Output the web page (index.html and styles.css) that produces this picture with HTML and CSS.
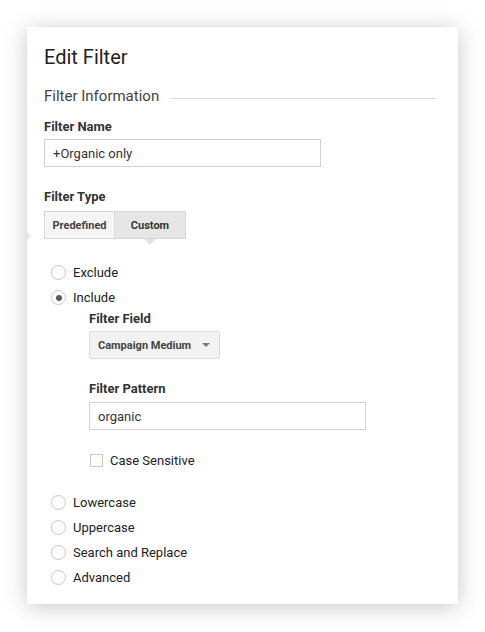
FILE: index.html
```html
<!DOCTYPE html>
<html>
<head>
<meta charset="utf-8">
<link rel="stylesheet" href="styles.css">
</head>
<body>
<div class="card">
  <span class="edge-tick"></span>
  <h1 class="title">Edit Filter</h1>
  <div class="section-head">
    <span class="section-title">Filter Information</span>
    <span class="section-rule"></span>
  </div>
  <div class="label label-name">Filter Name</div>
  <div class="input input-name">+Organic only</div>
  <div class="label label-type">Filter Type</div>
  <div class="btn-group">
    <div class="seg">Predefined</div>
    <div class="seg seg-active">Custom</div>
  </div>
  <div class="radios radios-top">
    <div class="radio-row"><span class="radio"></span><span class="radio-text">Exclude</span></div>
    <div class="radio-row"><span class="radio radio-on"></span><span class="radio-text">Include</span></div>
  </div>
  <div class="nested">
    <div class="label label-field">Filter Field</div>
    <div class="select"><span class="select-text">Campaign Medium</span><span class="caret"></span></div>
    <div class="label label-pattern">Filter Pattern</div>
    <div class="input input-pattern">organic</div>
    <div class="check-row"><span class="checkbox"></span><span class="check-text">Case Sensitive</span></div>
  </div>
  <div class="radios radios-bottom">
    <div class="radio-row"><span class="radio"></span><span class="radio-text">Lowercase</span></div>
    <div class="radio-row"><span class="radio"></span><span class="radio-text">Uppercase</span></div>
    <div class="radio-row"><span class="radio"></span><span class="radio-text">Search and Replace</span></div>
    <div class="radio-row"><span class="radio"></span><span class="radio-text">Advanced</span></div>
  </div>
</div>
</body>
</html>
```
FILE: styles.css
```css
html, body {
  margin: 0;
  background: #ffffff;
}
body {
  padding: 27px;
  font-family: Roboto, "Liberation Sans", Arial, sans-serif;
  color: #222;
}
.card {
  position: relative;
  box-sizing: border-box;
  width: 431px;
  height: 577px;
  background: #fff;
  padding: 18px 21px 13px 17px;
  box-shadow: 0 3px 22px rgba(0, 0, 0, 0.22);
}
.edge-tick {
  position: absolute;
  left: 0;
  top: 205px;
  width: 0;
  height: 0;
  border-top: 4px solid transparent;
  border-bottom: 4px solid transparent;
  border-left: 4px solid #e9e9e9;
}
.title {
  margin: 0;
  font-size: 20px;
  line-height: 24px;
  font-weight: 400;
  color: #222;
}
.section-head {
  display: flex;
  align-items: flex-start;
  margin-top: 18px;
}
.section-title {
  font-size: 15px;
  line-height: 18px;
  color: #444;
}
.section-rule {
  flex: 1;
  margin-top: 11px;
  margin-left: 11px;
  border-top: 1px solid #dedede;
}
.label {
  font-size: 13px;
  line-height: 16px;
  font-weight: 700;
  color: #333;
}
.label-name { margin-top: 14px; }
.label-type { margin-top: 22px; }
.label-field { margin-top: 0; }
.label-pattern { margin-top: 22px; }
.input {
  box-sizing: border-box;
  height: 28px;
  border: 1px solid #d2d2d2;
  padding: 1px 8px 0;
  font-size: 13px;
  line-height: 26px;
  color: #333;
}
.input-name {
  width: 277px;
  margin-top: 4px;
}
.input-pattern {
  width: 277px;
  margin-top: 5px;
}
.btn-group {
  display: flex;
  margin-top: 6px;
}
.seg {
  position: relative;
  box-sizing: border-box;
  width: 71px;
  height: 28px;
  border: 1px solid #d6d6d6;
  background: #f5f5f5;
  padding-top: 1px;
  font-size: 11px;
  line-height: 26px;
  font-weight: 700;
  text-align: center;
  color: #444;
}
.seg + .seg {
  border-left: 1px solid #dcdcdc;
  margin-left: -1px;
  width: 72px;
}
.seg-active {
  background: #e6e6e6;
  color: #333;
}
.seg-active::after {
  content: "";
  position: absolute;
  left: 50%;
  top: 27px;
  margin-left: -6px;
  border-left: 6px solid transparent;
  border-right: 6px solid transparent;
  border-top: 6px solid #e3e3e3;
}
.radios {
  margin-left: 7px;
}
.radios-top { margin-top: 21px; }
.radios-bottom { margin-top: 20px; }
.radio-row {
  display: flex;
  align-items: center;
  height: 25px;
}
.radio {
  box-sizing: border-box;
  width: 15px;
  height: 15px;
  border: 1px solid #c8c8c8;
  border-radius: 50%;
  display: flex;
  align-items: center;
  justify-content: center;
  background: #fff;
}
.radio-on::after {
  content: "";
  width: 6px;
  height: 6px;
  border-radius: 50%;
  background: #5a5a5a;
}
.radio-text {
  margin-left: 7px;
  font-size: 13px;
  line-height: 24px;
  color: #222;
}
.nested {
  margin-left: 45px;
}
.label-field { margin-top: 1px; }
.select {
  box-sizing: border-box;
  display: flex;
  align-items: center;
  justify-content: space-between;
  width: 131px;
  height: 28px;
  margin-top: 4px;
  padding: 0 9px 0 8px;
  border: 1px solid #dcdcdc;
  background: #f2f2f2;
  border-radius: 1px;
}
.select-text {
  font-size: 11px;
  font-weight: 700;
  color: #444;
}
.caret {
  width: 0;
  height: 0;
  border-left: 4px solid transparent;
  border-right: 4px solid transparent;
  border-top: 4px solid #7a7a7a;
}
.check-row {
  display: flex;
  align-items: center;
  height: 20px;
  margin-top: 20px;
  margin-left: 1px;
}
.checkbox {
  box-sizing: border-box;
  width: 13px;
  height: 13px;
  border: 1px solid #c8c8c8;
  background: #fff;
}
.check-text {
  margin-left: 7px;
  font-size: 13px;
  color: #222;
}
```
